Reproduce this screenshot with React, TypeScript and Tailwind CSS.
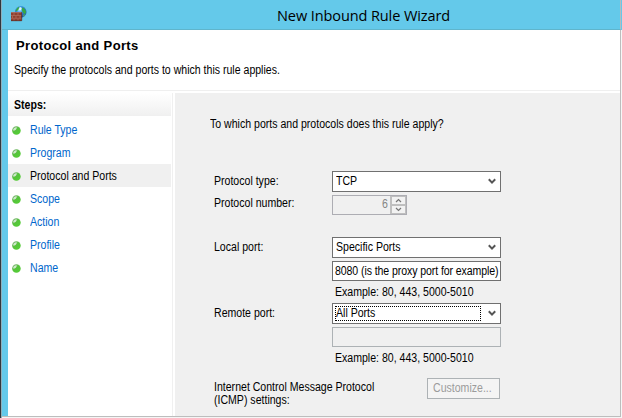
import type { ReactNode } from 'react';

const steps = ['Rule Type', 'Program', 'Protocol and Ports', 'Scope', 'Action', 'Profile', 'Name'];

function T({ children }: { children: ReactNode }) {
  return <span className="inline-block origin-left scale-x-[0.88] whitespace-nowrap">{children}</span>;
}

function FirewallIcon() {
  return (
    <svg width="16" height="16" viewBox="0 0 16 16" className="ml-[9px] mt-[6px] shrink-0">
      <defs>
        <radialGradient id="globe" cx="0.4" cy="0.3" r="0.7">
          <stop offset="0" stopColor="#c4ecff" />
          <stop offset="0.4" stopColor="#3a94e4" />
          <stop offset="1" stopColor="#1850a8" />
        </radialGradient>
      </defs>
      <circle cx="9.7" cy="5.9" r="5.8" fill="url(#globe)" />
      <path d="M4.4 4.6 6.6 1.4l1.6-.6-.6 2.6-2.2 2zM11.2 1.2l2.2 1.2 1.6 2.8-.2 2.4-1.6.4-1.6-2-.8-2z" fill="#35a844" />
      <path d="M7.6 3.4 9.4 1l1.2 1.2-.8 2z" fill="#e2f8f4" />
      <path d="M12.6 8.6h1.6l-1.2 1.8h-1z" fill="#58b85a" />
      <path d="M0 6.2h10.7V15H0z" fill="#8f4030" />
      <path d="M0 6.5h10.5M0 9.5h10.5M0 12.3h10.5M3 7v2.5M7 7v2.5M1.5 10v2M5 10v2M9 10v2M3 13v2M7 13v2" stroke="#b97868" strokeWidth="0.6" />
      <path d="M0 14.7h10.7V6.3" fill="none" stroke="#552b25" strokeWidth="0.7" />
    </svg>
  );
}

function Bullet() {
  return (
    <svg width="9" height="9" viewBox="0 0 9 9" className="ml-[4px] shrink-0">
      <defs>
        <linearGradient id="ball" x1="0" y1="0" x2="0.75" y2="1">
          <stop offset="0" stopColor="#8fb08c" />
          <stop offset="0.5" stopColor="#56c23c" />
          <stop offset="1" stopColor="#55cf35" />
        </linearGradient>
      </defs>
      <circle cx="4.4" cy="4.5" r="4.3" fill="url(#ball)" />
      <path d="M1.1 4.6C1 2.4 2.8 1.1 4.8 1.2 4.9 3.2 3.4 4.6 1.1 4.6z" fill="#cfe9cb" />
    </svg>
  );
}

function Chevron() {
  return (
    <svg width="8" height="7" viewBox="0 0 8 7" className="mr-[4px] shrink-0">
      <path d="M.8 1.2 4 4.6 7.2 1.2" fill="none" stroke="#555" strokeWidth="2" />
    </svg>
  );
}

function Select({ children, focused = false }: { children: ReactNode; focused?: boolean }) {
  return (
    <div className="flex h-[21px] w-[169px] shrink-0 items-center justify-between border border-[#707070] bg-white">
      {focused ? (
        <span className="ml-[2px] flex h-[15px] w-[146px] items-center border border-dotted border-black"><T>{children}</T></span>
      ) : (
        <span className="ml-[3px]"><T>{children}</T></span>
      )}
      <Chevron />
    </div>
  );
}

function Label({ children }: { children: ReactNode }) {
  return <div className="w-[118px] shrink-0"><T>{children}</T></div>;
}

export default function App() {
  return (
    <div className="flex h-[418px] w-[622px] overflow-hidden bg-[#64c9ea] font-['Liberation_Sans',Arial,sans-serif] text-[12px] leading-[13px] text-black">
      <div className="w-px shrink-0 bg-[#30363d]" />
      <div className="flex w-[620px] shrink-0 flex-col border-l border-[#8fb0bb]">
        <div className="flex h-[30px] w-full shrink-0 border-b border-[#5fb5cc] border-r border-r-[#b6bcc0]">
          <FirewallIcon />
          <div className="ml-[250px] mt-[5px] origin-left scale-x-[0.97] whitespace-nowrap font-['Open_Sans',sans-serif] text-[15px] leading-[20px] tracking-[-0.12px]">New Inbound Rule Wizard</div>
        </div>
        <div className="flex h-[387px] shrink-0 border-b border-[#bdbdbd]">
          <div className="w-[6px] shrink-0" />
          <div className="flex grow flex-col border-r border-[#bdbdbd] bg-white">
            <header className="h-[61px] shrink-0 whitespace-nowrap border-b border-[#efefef]">
              <h1 className="ml-[8px] pt-[8px] text-[13px] font-bold leading-[16px] tracking-[0.35px]">Protocol and Ports</h1>
              <p className="ml-[6px] mt-[10px]"><T>Specify the protocols and ports to which this rule applies.</T></p>
            </header>
            <div className="mt-[2px] flex grow">
              <nav className="mr-[2px] w-[165px] shrink-0 border-r border-[#f0f0f0]">
                <div className="mb-[2px] mr-px flex h-[23px] items-center bg-linear-to-b from-white to-[#f0f0f0] pl-[6px] pt-[2px] font-bold"><T>Steps:</T></div>
                {steps.map((step) => (
                  <div key={step} className={`mr-px flex h-[23px] items-center pt-[2px] ${step === 'Protocol and Ports' ? 'bg-[#f0f0f0] text-black' : 'text-[#0066cc]'}`}>
                    <Bullet />
                    <span className="ml-[9px]"><T>{step}</T></span>
                  </div>
                ))}
              </nav>
              <main className="flex grow flex-col bg-[#f0f0f0] pl-[39px]">
                <p className="-ml-[4px] mt-[25px]"><T>To which ports and protocols does this rule apply?</T></p>
                <div className="mt-[40px] flex items-center">
                  <Label>Protocol type:</Label>
                  <Select>TCP</Select>
                </div>
                <div className="mt-[3px] flex h-[20px]">
                  <Label><span className="block pt-[2px]">Protocol number:</span></Label>
                  <div className="flex w-[75px] border border-[#adadb3] text-[#858585]">
                    <span className="grow pr-px pt-[2px] text-right"><T>6</T></span>
                    <div className="flex w-[16px] flex-col border-l border-[#c0c0c0]">
                      <svg width="15" height="9" viewBox="0 0 15 9"><rect x=".5" y=".5" width="14" height="8" fill="#f2f2f2" stroke="#bfbfbf" /><path d="m5 6 2.5-2.5L10 6" fill="none" stroke="#777" strokeWidth="1.2" /></svg>
                      <svg width="15" height="9" viewBox="0 0 15 9"><rect x=".5" y=".5" width="14" height="8" fill="#f2f2f2" stroke="#bfbfbf" /><path d="M5 3 7.5 5.5 10 3" fill="none" stroke="#777" strokeWidth="1.2" /></svg>
                    </div>
                  </div>
                </div>
                <div className="mt-[22px] flex items-center">
                  <Label>Local port:</Label>
                  <Select>Specific Ports</Select>
                </div>
                <div className="ml-[118px] mt-[3px] flex h-[20px] w-[169px] items-center border border-[#707070] bg-white pl-[2px]"><span className="w-0"><T><span className="tracking-[-0.1px]">8080 (is the proxy port for example)</span></T></span></div>
                <p className="ml-[121px] mt-[5px]"><T>Example: 80, 443, 5000-5010</T></p>
                <div className="mt-[4px] flex items-center">
                  <Label>Remote port:</Label>
                  <Select focused>All Ports</Select>
                </div>
                <div className="ml-[118px] mt-[3px] h-[20px] w-[169px] border border-[#adb2b5]" />
                <p className="ml-[121px] mt-[5px]"><T>Example: 80, 443, 5000-5010</T></p>
                <div className="mt-[13px] flex">
                  <p className="mt-[3px] w-[213px]"><T>Internet Control Message Protocol<br />(ICMP) settings:</T></p>
                  <div className="flex h-[21px] w-[73px] items-center border border-[#adb2b5] bg-[#f4f4f4] pl-[5px] text-[#9b9b9b]"><T>Customize...</T></div>
                </div>
              </main>
            </div>
          </div>
        </div>
        <div className="h-px bg-[#f5f5f5]" />
      </div>
      <div className="flex grow flex-col"><div className="h-[30px]" /><div className="grow bg-[#f7f7f7]" /></div>
    </div>
  );
}
